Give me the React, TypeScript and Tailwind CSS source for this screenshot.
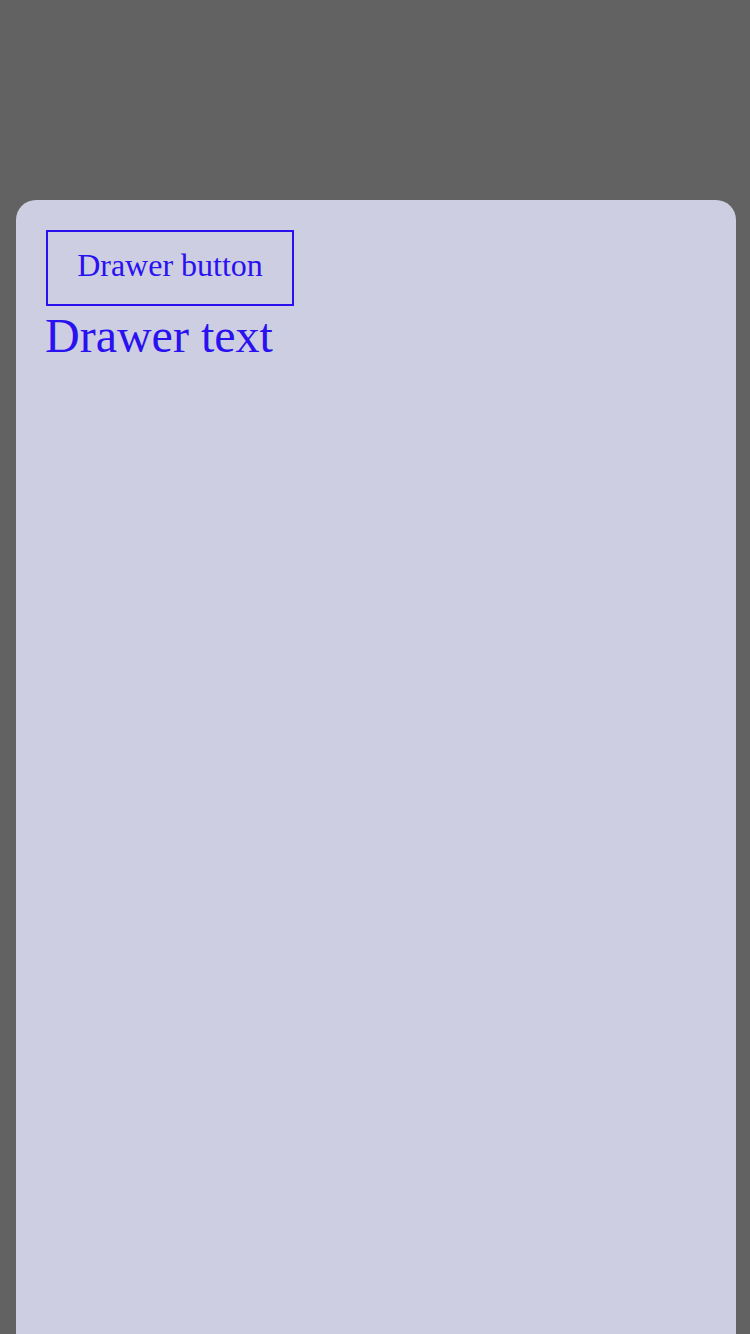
import React from 'react'

const App = () => {
  return (
    <div className="min-h-[1334px] w-full bg-[#636262] flex flex-col pt-[200px] pl-4 pr-[14px]" style={{ fontFamily: '"Liberation Serif", serif' }}>
      <div className="flex-1 bg-[#cecee3] rounded-t-[20px] p-[30px] flex flex-col items-start text-[#2a12f0]">
        <button className="w-[248px] h-[76px] border-2 border-[#2a12f0] text-[32px] leading-none pb-[6px] flex items-center justify-center">
          Drawer button
        </button>
        <p className="text-[48px] leading-[60px] -ml-px">Drawer text</p>
      </div>
    </div>
  )
}

export default App
